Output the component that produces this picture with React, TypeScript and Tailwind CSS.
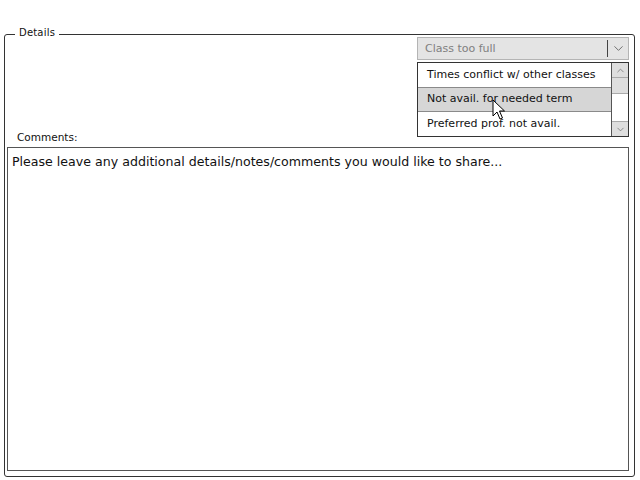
import { ChevronDown, ChevronUp } from "lucide-react";

const options = [
  { label: "Times conflict w/ other classes", active: false },
  { label: "Not avail. for needed term", active: true },
  { label: "Preferred prof. not avail.", active: false },
];

function Cursor() {
  return (
    <svg width="14" height="22" viewBox="0 0 14 22" className="absolute left-[492px] top-[99px]">
      <path
        d="M1 1 L1 17 L5 13 L8 20 L10.5 19 L7.5 12 L12.5 12 Z"
        fill="white"
        stroke="black"
        strokeWidth="1"
        strokeLinejoin="miter"
      />
    </svg>
  );
}

export default function App() {
  return (
    <div className="relative w-[640px] h-[480px] bg-white overflow-hidden font-['DejaVu_Sans',sans-serif] text-[#111]">
      <div className="relative mt-[34px] ml-[4px] w-[631px] h-[443px] border border-[#333] rounded-[3px] pt-[2px] pl-[2px] pr-[5px] pb-[5px] flex flex-col">
        <span className="absolute -top-[9px] left-[10px] bg-white px-[4px] text-[10px] leading-[14px] tracking-[0.2px]">
          Details
        </span>

        {/* combo box */}
        <div className="self-end w-[212px] h-[23px] border border-[#b4b4b4] bg-[#e4e4e4] flex items-center">
          <span className="flex-1 pl-[7px] pt-[2px] text-[11px] text-[#808080]">Class too full</span>
          <div className="w-px h-[17px] bg-[#444]" />
          <div className="w-[20px] flex items-center justify-center">
            <ChevronDown size={15} strokeWidth={1.3} className="text-[#555]" />
          </div>
        </div>

        <div className="mt-[71px] pl-[10px] text-[10.5px] leading-[13px]">Comments:</div>

        <div className="mt-[3px] flex-1 border border-[#555] pl-[4px] pt-[6px] text-[12.6px] leading-[16px]">
          Please leave any additional details/notes/comments you would like to share...
        </div>

        {/* open dropdown list */}
        <div className="absolute top-[27px] right-[5px] w-[212px] h-[75px] border border-[#333] bg-white flex">
          <div className="flex-1 flex flex-col">
            {options.map((o) => (
              <div
                key={o.label}
                className={
                  o.active
                    ? "h-[25px] flex items-center pl-[9px] text-[11px] bg-[#d6d6d6] border-y border-[#8a8a8a]"
                    : "h-[24px] flex items-center pl-[9px] text-[11px]"
                }
              >
                {o.label}
              </div>
            ))}
          </div>
          <div className="w-[17px] border-l border-[#555] flex flex-col">
            <div className="h-[15px] bg-[#dedede] border-b border-[#aaa] flex items-center justify-center">
              <ChevronUp size={11} strokeWidth={1.3} className="text-[#555]" />
            </div>
            <div className="h-[16px] bg-[#dedede] border-b border-[#aaa]" />
            <div className="flex-1" />
            <div className="h-[15px] bg-[#dedede] border-t border-[#aaa] flex items-center justify-center">
              <ChevronDown size={11} strokeWidth={1.3} className="text-[#555]" />
            </div>
          </div>
        </div>
      </div>
      <Cursor />
    </div>
  );
}
